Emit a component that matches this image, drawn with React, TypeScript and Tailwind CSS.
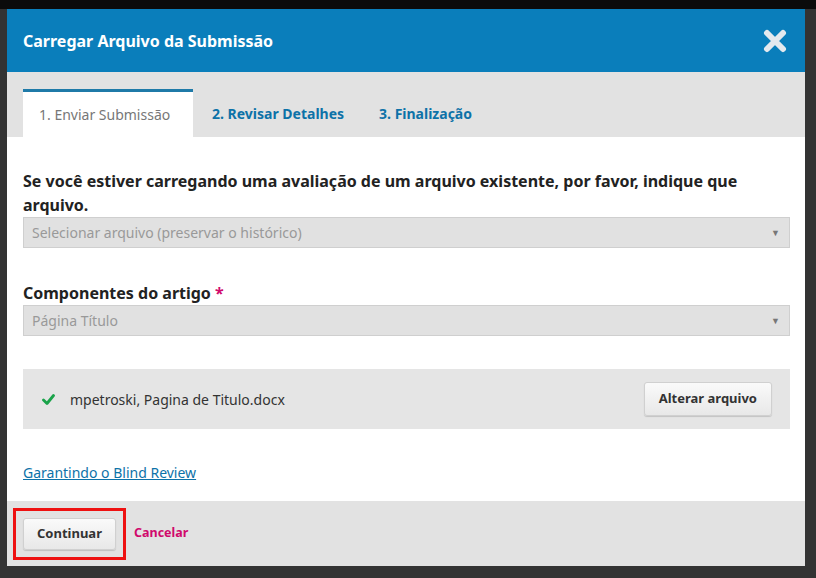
export default function App() {
    return (
        <div className="w-[816px] h-[578px] bg-[#333333] overflow-hidden" style={{ fontFamily: '"Noto Sans", sans-serif' }}>
            <div className="h-[9px] bg-[#0b0b0b]" />
            <div className="ml-[7px] w-[798px] flex flex-col">
                {/* Header */}
                <div className="h-[63px] bg-[#0a7ebb] flex items-center justify-between pl-4 pr-[18px]">
                    <h1 className="text-white font-bold text-[16px]">Carregar Arquivo da Submissão</h1>
                    <svg width="24" height="24" viewBox="0 0 24 24">
                        <path d="M4 4 L20 20 M20 4 L4 20" stroke="#e4e9ee" strokeWidth="6" strokeLinecap="round" />
                    </svg>
                </div>

                {/* Tabs */}
                <div className="h-[65px] bg-[#e2e2e2] flex items-end pl-4">
                    <div className="h-[48px] w-[170px] bg-white border-t-[3px] border-[#1f7aa8] flex items-center pl-4 text-[14px] text-[#777]">
                        1. Enviar Submissão
                    </div>
                    <div className="h-[48px] flex items-center pl-[19px] text-[14px] font-bold text-[#0d72a8]">
                        2. Revisar Detalhes
                    </div>
                    <div className="h-[48px] flex items-center pl-[35px] text-[14px] font-bold text-[#0d72a8]">
                        3. Finalização
                    </div>
                </div>

                {/* Body */}
                <div className="bg-white pl-4 pr-[15px] pt-[32px] pb-[20px] h-[364px]">
                    <p className="text-[16px] font-bold text-[#222] leading-6">
                        Se você estiver carregando uma avaliação de um arquivo existente, por favor, indique que arquivo.
                    </p>
                    <div className="h-[31px] bg-[#e1e1e1] border border-[#cfcfcf] flex items-center justify-between pl-2 pr-[9px] text-[14px] text-[#999]">
                        <span>Selecionar arquivo (preservar o histórico)</span>
                        <span className="text-[9px] text-[#777]">▼</span>
                    </div>

                    <p className="mt-[33px] text-[16px] font-bold text-[#222] leading-6">
                        Componentes do artigo <span className="text-[#d00a6c]">*</span>
                    </p>
                    <div className="h-[31px] bg-[#e1e1e1] border border-[#cfcfcf] flex items-center justify-between pl-2 pr-[9px] text-[14px] text-[#999]">
                        <span>Página Título</span>
                        <span className="text-[9px] text-[#777]">▼</span>
                    </div>

                    <div className="mt-[33px] h-[60px] bg-[#e5e5e5] flex items-center justify-between pl-[19px] pr-[18px]">
                        <div className="flex items-center gap-[15px] text-[14px] text-[#333]">
                            <svg width="13" height="13" viewBox="0 0 13 13">
                                <path d="M1.5 7 L5 10.5 L11.5 2.5" fill="none" stroke="#1aa34a" strokeWidth="2.8" strokeLinecap="round" strokeLinejoin="round" />
                            </svg>
                            <span>mpetroski, Pagina de Titulo.docx</span>
                        </div>
                        <button className="h-[34px] px-[14px] bg-gradient-to-b from-[#fafafa] to-[#e8e8e8] border border-[#d0d0d0] rounded-[3px] shadow-[0_1px_1px_rgba(0,0,0,0.15)] text-[13px] font-bold text-[#333]">
                            Alterar arquivo
                        </button>
                    </div>

                    <a href="#" className="block mt-[33px] text-[14px] text-[#0d72a8] underline">
                        Garantindo o Blind Review
                    </a>
                </div>

                {/* Footer */}
                <div className="h-[65px] bg-[#e2e2e2] flex items-center pl-[6px]">
                    <div className="border-[3px] border-[#ee1111] px-[7px] py-[7px]">
                        <button className="h-[32px] w-[93px] bg-gradient-to-b from-[#fafafa] to-[#e8e8e8] border border-[#d0d0d0] rounded-[3px] shadow-[0_1px_1px_rgba(0,0,0,0.15)] text-[13px] font-bold text-[#333]">
                            Continuar
                        </button>
                    </div>
                    <a href="#" className="ml-[8px] text-[12.5px] font-bold text-[#d00a6c]">Cancelar</a>
                </div>
            </div>
        </div>
    );
}
